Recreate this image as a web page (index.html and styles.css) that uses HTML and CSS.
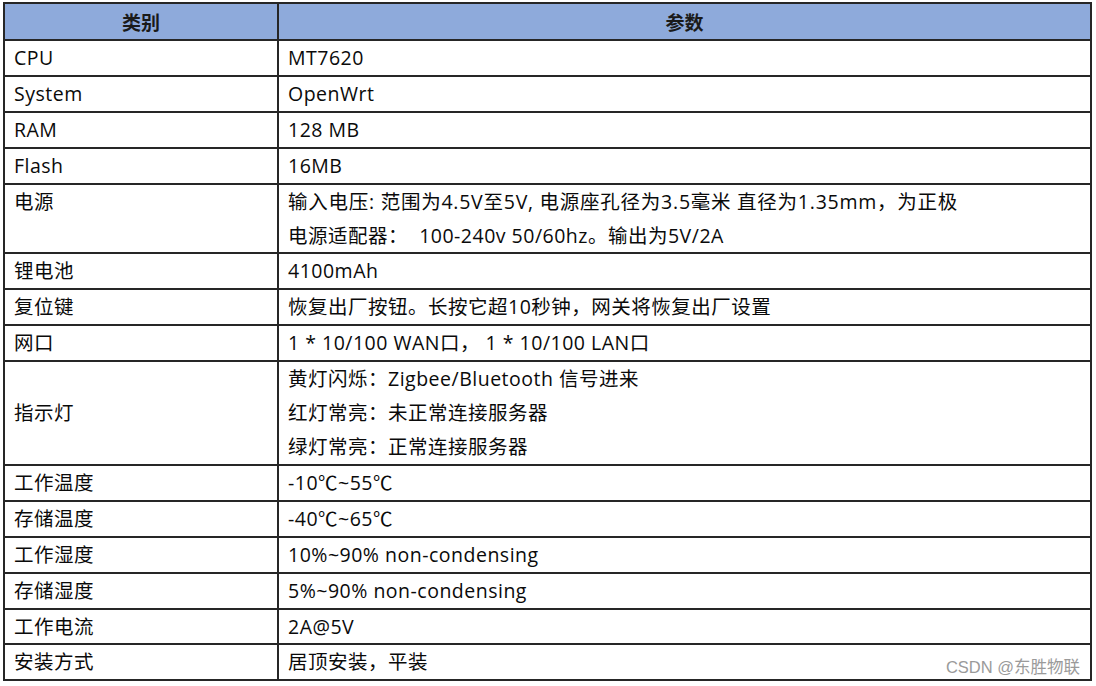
FILE: index.html
```html
<!DOCTYPE html>
<html lang="zh-CN">
<head>
<meta charset="utf-8">
<title>参数表</title>
<link rel="stylesheet" href="styles.css">
</head>
<body>
<div class="page">
  <table class="spec">
    <colgroup><col class="c1"><col class="c2"></colgroup>
    <thead>
      <tr><th>类别</th><th>参数</th></tr>
    </thead>
    <tbody>
      <tr><td>CPU</td><td>MT7620</td></tr>
      <tr><td>System</td><td>OpenWrt</td></tr>
      <tr><td>RAM</td><td>128 MB</td></tr>
      <tr><td>Flash</td><td>16MB</td></tr>
      <tr><td class="top">电源</td><td><div class="wide">输入电压: 范围为4.5V至5V, 电源座孔径为3.5毫米 直径为1.35mm，为正极</div><div>电源适配器：&nbsp;&nbsp;100-240v 50/60hz。输出为5V/2A</div></td></tr>
      <tr><td>锂电池</td><td>4100mAh</td></tr>
      <tr><td>复位键</td><td>恢复出厂按钮。长按它超10秒钟，网关将恢复出厂设置</td></tr>
      <tr><td>网口</td><td>1 * 10/100 WAN口，&nbsp;1 * 10/100 LAN口</td></tr>
      <tr><td>指示灯</td><td><div>黄灯闪烁：Zigbee/Bluetooth 信号进来</div><div>红灯常亮：未正常连接服务器</div><div>绿灯常亮：正常连接服务器</div></td></tr>
      <tr><td>工作温度</td><td>-10℃~55℃</td></tr>
      <tr><td>存储温度</td><td>-40℃~65℃</td></tr>
      <tr><td>工作湿度</td><td>10%~90% non-condensing</td></tr>
      <tr><td>存储湿度</td><td>5%~90% non-condensing</td></tr>
      <tr><td>工作电流</td><td>2A@5V</td></tr>
      <tr><td>安装方式</td><td class="last">居顶安装，平装<span class="mark">CSDN @东胜物联</span></td></tr>
    </tbody>
  </table>
</div>
</body>
</html>
```

FILE: styles.css
```css
html, body {
  margin: 0;
  padding: 0;
  background: #ffffff;
}

.page {
  padding: 2px 0 0 3px;
}

.spec {
  width: 1089px;
  table-layout: fixed;
  border-collapse: collapse;
  font-family: "Open Sans", "Noto Sans CJK SC", sans-serif;
  font-size: 19.5px;
  letter-spacing: 0.5px;
  color: #0a0a0a;
}

.spec .c1 { width: 274px; }

.spec th,
.spec td {
  border: 2px solid #262626;
  padding: 0 10px;
  line-height: 33.9px;
  vertical-align: middle;
  text-align: left;
  white-space: nowrap;
}

.spec td {
  padding-left: 9px;
}

.spec th {
  background: #8eaadb;
  text-align: center;
  font-weight: 700;
  font-family: "Noto Sans CJK SC", sans-serif;
  font-size: 19px;
  letter-spacing: 0;
  line-height: 35px;
  color: #1a1a1a;
}

.spec td.top {
  vertical-align: top;
}

.spec .wide {
  letter-spacing: 0.75px;
}

.spec td.last {
  position: relative;
}

.mark {
  position: absolute;
  right: 10px;
  bottom: 2px;
  font-family: "Liberation Sans", "Noto Sans CJK SC", sans-serif;
  font-size: 16.5px;
  letter-spacing: 0;
  line-height: 20px;
  color: #9a9a9a;
}
```
